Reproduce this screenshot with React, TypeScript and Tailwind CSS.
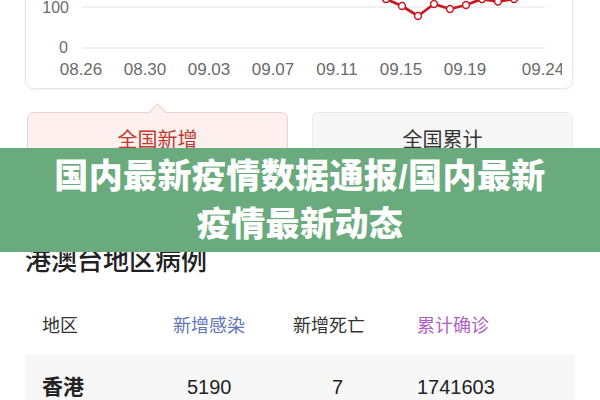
import React from "react";

const FONT = {
  fontFamily: '"Liberation Sans", "Noto Sans CJK SC", sans-serif',
};

type Pt = [number, number];

// page-space points, one per day (16px apart)
const linePoints: Pt[] = [
  [370, -30],
  [386, -1],
  [402, 6],
  [418, 16],
  [434, 4],
  [450, 9],
  [466, 5],
  [482, -1],
  [498, 1.5],
  [514, -1],
  [530, -26],
];

const xLabels: [string, number][] = [
  ["08.26", 81],
  ["08.30", 145],
  ["09.03", 209],
  ["09.07", 273],
  ["09.11", 337],
  ["09.15", 401],
  ["09.19", 465],
  ["09.24", 543],
];

function TrendChart() {
  return (
    <div className="-mt-[20px] ml-[25px] h-[109px] w-[548px] overflow-hidden rounded-[9px] border border-[#e6e6e6] bg-white shadow-[0_1px_3px_rgba(0,0,0,0.05)]">
      <svg width={536} height={107} viewBox="26 -19 536 107">
        <line x1={82} y1={7} x2={545} y2={7} stroke="#ededed" strokeWidth={1.5} />
        <line x1={82} y1={48} x2={545} y2={48} stroke="#ededed" strokeWidth={1.5} />
        <text x={69} y={13} textAnchor="end" fontSize={16} fill="#6b6b6b">
          100
        </text>
        <text x={68} y={53} textAnchor="end" fontSize={16} fill="#6b6b6b">
          0
        </text>
        {xLabels.map(([label, x]) => (
          <text key={label} x={x} y={75} textAnchor="middle" fontSize={17} fill="#6b6b6b">
            {label}
          </text>
        ))}
        <polyline
          points={linePoints.map((p) => p.join(",")).join(" ")}
          fill="none"
          stroke="#c8191f"
          strokeWidth={2.8}
          strokeLinejoin="round"
        />
        {linePoints.map(([x, y]) => (
          <circle key={x} cx={x} cy={y} r={3.4} fill="#fff" stroke="#c8191f" strokeWidth={1.5} />
        ))}
      </svg>
    </div>
  );
}

function Tabs() {
  return (
    <div className="mt-[23px] flex gap-[24px] pl-[27px]">
      <div className="relative flex h-[56px] w-[261px] items-center justify-center rounded-[7px] border border-[#f0cfca] bg-[#fdf0ee] text-[20px] text-[#c0392e]">
        <div className="absolute -top-[7px] left-[123px] h-[13px] w-[13px] rotate-45 border-l border-t border-[#f0cfca] bg-[#fdf0ee]" />
        <span className="relative">全国新增</span>
      </div>
      <div className="flex h-[56px] w-[261px] items-center justify-center rounded-[7px] border border-[#ebebeb] bg-[#f7f7f7] text-[20px] text-[#333]">
        全国累计
      </div>
    </div>
  );
}

function RegionTable() {
  return (
    <div>
      <h2 className="mt-[78px] pl-[25px] text-[26px] font-medium leading-[30px] text-[#222]">
        港澳台地区病例
      </h2>
      <div className="mt-[38px] grid grid-cols-[131px_120px_124px_1fr] pl-[42px] text-[18px] leading-[24px]">
        <span className="text-[#333]">地区</span>
        <span className="text-[#5f76b8]">新增感染</span>
        <span className="text-[#333]">新增死亡</span>
        <span className="text-[#b25fc6]">累计确诊</span>
      </div>
      <div className="mx-[25px] mt-[17px] grid h-[64px] grid-cols-[131px_120px_124px_1fr] items-center bg-[#f7f7f7] pl-[17px] text-[20px] text-[#222]">
        <span className="text-[21px] font-semibold">香港</span>
        <span className="pl-[14px]">5190</span>
        <span className="pl-[39px]">7</span>
        <span>1741603</span>
      </div>
    </div>
  );
}

export default function App() {
  return (
    <div className="relative h-[400px] w-[600px] overflow-hidden bg-white" style={FONT}>
      <TrendChart />
      <Tabs />
      <RegionTable />
      <div className="absolute left-0 top-[148px] flex h-[104px] w-full flex-col items-center justify-center bg-[#6aab7d] text-[34px] font-black leading-[48px] tracking-[0.4px] text-white">
        <span>国内最新疫情数据通报/国内最新</span>
        <span>疫情最新动态</span>
      </div>
    </div>
  );
}
